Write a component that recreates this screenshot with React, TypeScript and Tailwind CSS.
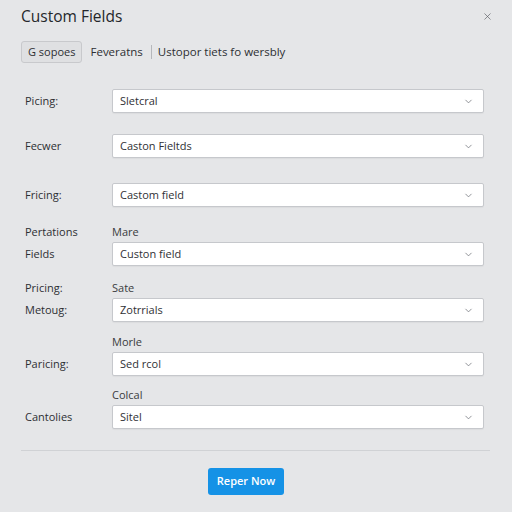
import { ChevronDown, X } from 'lucide-react';

type Row = {
  top: string;
  over?: string;
  labelTop?: string;
  label: string;
  value: string;
};

const rows: Row[] = [
  { top: 'mt-[26px]', label: 'Picing:', value: 'Sletcral' },
  { top: 'mt-[21px]', label: 'Fecwer', value: 'Caston Fieltds' },
  { top: 'mt-[25px]', label: 'Fricing:', value: 'Castom field' },
  { top: 'mt-[18px]', over: 'Mare', labelTop: 'Pertations', label: 'Fields', value: 'Custon field' },
  { top: 'mt-[15px]', over: 'Sate', labelTop: 'Pricing:', label: 'Metoug:', value: 'Zotrrials' },
  { top: 'mt-[13px]', over: 'Morle', label: 'Paricing:', value: 'Sed rcol' },
  { top: 'mt-[12px]', over: 'Colcal', label: 'Cantolies', value: 'Sitel' },
];

function Field({ row }: { row: Row }) {
  return (
    <div className={`${row.top} grid grid-cols-[91px_1fr] pr-[6px]`}>
      {row.over && (
        <>
          <div className="h-[14px] mb-[3px] pl-[4px] text-[11px] leading-[14px] text-[#2d2f33]">{row.labelTop}</div>
          <div className="h-[14px] mb-[3px] text-[11px] leading-[14px] text-[#3a3c40]">{row.over}</div>
        </>
      )}
      <div className="h-[24px] pl-[4px] flex items-center text-[11px] text-[#2d2f33]">{row.label}</div>
      <div className="h-[24px] bg-white border border-[#c6c8cc] rounded-[2px] flex items-center justify-between pl-[7px] pr-[9px] text-[11px] text-[#2f3135] shadow-[0_1px_1px_rgba(0,0,0,0.04)]">
        <span>{row.value}</span>
        <ChevronDown size={11} strokeWidth={1.6} className="text-[#6b6e74]" />
      </div>
    </div>
  );
}

export default function App() {
  return (
    <div className="w-[512px] h-[512px] bg-[#e5e6e8] pl-[21px] pr-[22px] pt-[6px] font-['Open_Sans',sans-serif] overflow-hidden">
      <div className="flex items-center justify-between h-[20px]">
        <h1 className="text-[15.5px] leading-[20px] text-[#24262a]">Custom Fields</h1>
        <X size={11} strokeWidth={1.4} className="text-[#55585e] mr-[-3px]" />
      </div>

      <div className="mt-[15px] flex items-center h-[22px] text-[11.5px] text-[#2d2f33]">
        <span className="h-[22px] px-[6px] flex items-center bg-[#dfe0e2] border border-[#c8c9cc] rounded-[3px] text-[11px]">G sopoes</span>
        <span className="ml-[8px]">Feveratns</span>
        <span className="ml-[8px] w-px h-[14px] bg-[#b5b7bb]" />
        <span className="ml-[6px]">Ustopor tiets fo wersbly</span>
      </div>

      {rows.map((r, i) => (
        <Field key={i} row={r} />
      ))}

      <div className="mt-[21px] h-px bg-[#d0d2d5]" />

      <div className="mt-[16px] pl-[187px]">
        <button className="h-[27px] w-[76px] rounded-[3px] bg-[#1592e6] text-white text-[11px] font-semibold">
          Reper Now
        </button>
      </div>
    </div>
  );
}
